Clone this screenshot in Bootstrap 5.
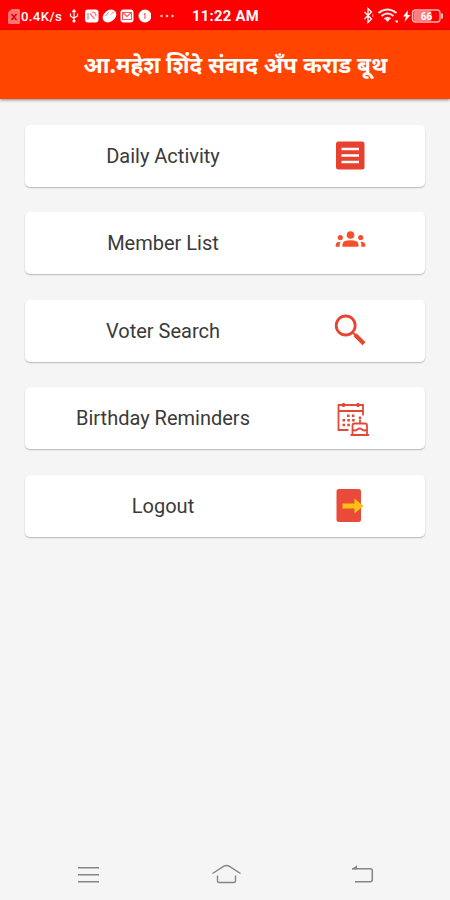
<!DOCTYPE html>
<html lang="mr">
<head>
<meta charset="utf-8">
<meta name="viewport" content="width=device-width, initial-scale=1">
<title>Karad Booth</title>
<link href="https://cdn.jsdelivr.net/npm/bootstrap@5.3.0/dist/css/bootstrap.min.css" rel="stylesheet">
<style>
body { background: #f5f5f5; font-family: Roboto, sans-serif; height: 900px; overflow: hidden; }
svg { display: block; flex: none; }
.status-bar { height: 30px; background: #fe0000; color: #fff; padding: 2px 6px 0 8px; }
.speed { width: 42px; margin: 0 6px 0 1px; font-size: 13.2px; font-weight: 500; letter-spacing: .35px; line-height: 15px; white-space: nowrap; }
.clock { width: 70px; margin-left: 18px; font-size: 14.8px; font-weight: 700; letter-spacing: .3px; line-height: 17px; white-space: nowrap; }
.app-bar { height: 69px; background: #ff4500; box-shadow: 0 1px 3px rgba(0,0,0,.45); padding-left: 83.5px; }
.app-title { font-family: "Noto Sans", "Noto Sans Devanagari", sans-serif; font-size: 22.65px; font-weight: 700; color: #fff; line-height: 32px; white-space: nowrap; }
.menu { padding: 25.5px 25px 0; gap: 25.5px; }
.menu-item { height: 62px; border-radius: 5px; box-shadow: 0 1px 1.5px rgba(0,0,0,.26); color: #3a3a3a; }
.menu-label { width: 276px; font-size: 20px; line-height: 24px; }
.menu-icon { margin-left: 29px; }
.nav-keys { height: 50px; padding: 0 74px; }
</style>
</head>
<body class="d-flex flex-column">
<header>
  <div class="status-bar d-flex align-items-center">
    <svg width="12" height="15" viewBox="0 0 12 15"><path d="M3.500 0H10.500a1.500 1.500 0 0 1 1.500 1.500V13.500a1.500 1.500 0 0 1-1.500 1.500H1.500A1.500 1.500 0 0 1 0 13.500V3.500z" fill="#ff7474"/><path d="M3.500 5l5 6M8.500 5l-5 6" stroke="#e00000" stroke-width="1.500"/></svg>
    <span class="speed">0.4K/s</span>
    <svg width="10" height="14" viewBox="0 0 10 14" fill="none" stroke="#fff" stroke-width="1.200"><path d="M5 2v10M1.500 4.500V7L5 9.500M8.500 4.500V7L5 9M3.300 3L5 1l1.700 2"/><circle cx="5" cy="12" r="1" fill="#fff"/></svg>
    <svg class="ms-1" width="68" height="14" viewBox="83 8 68 14">
      <rect x="85" y="8.500" width="13.500" height="13" rx="3" fill="#fff"/><path d="M88 12v6.500M90 12.500l4.500 5.500M91.500 11q4.500 0 4.500 4.500" fill="none" stroke="#f87070" stroke-width="1.200"/>
      <ellipse cx="109.500" cy="15" rx="7.500" ry="5.700" transform="rotate(-40 109.500 15)" fill="#fff"/><path d="M105.500 15l3-3.500M111 13.500l3-3" stroke="#f66" stroke-width="1"/>
      <rect x="120.500" y="8.500" width="13" height="13" rx="3" fill="#fff"/><path d="M122.500 11.500h9v7h-9zl4.500 4 4.500-4" fill="none" stroke="#f55" stroke-width="1.100"/>
      <circle cx="145" cy="15" r="6.500" fill="#fff"/><path d="M145 12v6M144 13h1" stroke="#f66" stroke-width="1.300"/>
    </svg>
    <svg style="margin-left:9px" width="14" height="4" viewBox="0 0 14 4" fill="#ffc2c2"><circle cx="1.500" cy="2" r="1.300"/><circle cx="7" cy="2" r="1.300"/><circle cx="12.500" cy="2" r="1.300"/></svg>
    <span class="clock">11:22 AM</span>
    <svg class="ms-auto" width="82" height="18" viewBox="362 7 82 18">
      <path d="M364.500 12l7 7-3.500 3.500V8.500l3.500 3.500-7 7" fill="none" stroke="#fff" stroke-width="1.300"/><path d="M372.800 14v3" stroke="#ff9a9a"/>
      <g fill="none" stroke="#ffe4e4" stroke-width="2.100"><path d="M378.500 13q9-7 18 0M381.500 16q6-5 12 0M384.500 19q3-2.500 6 0"/></g><path d="M385.500 19.500q2-1.500 4 0l-2 2.500zM395 20.500h3v2h-2z" fill="#fff"/>
      <path d="M408 10l-5 6.500h3L404.500 22l6-7h-3z" fill="#fff"/>
      <rect x="412.500" y="10" width="27.500" height="12" rx="3" fill="none" stroke="#ffb5b5" stroke-width="1.300"/><rect x="413.500" y="11" width="18" height="10" rx="2" fill="#ff7d7d"/><path d="M442 13.500v5" stroke="#ffb5b5" stroke-width="2"/>
      <text x="426.500" y="19.500" text-anchor="middle" font-family="Roboto, sans-serif" font-weight="700" font-size="10" fill="#fff">66</text>
    </svg>
  </div>
  <div class="app-bar d-flex align-items-center"><h1 class="app-title m-0">आ.महेश शिंदे संवाद अँप कराड बूथ</h1></div>
</header>
<main class="menu d-flex flex-column">
  <div class="menu-item bg-white d-flex align-items-center">
    <span class="menu-label text-center">Daily Activity</span>
    <svg class="menu-icon" width="40" height="40" viewBox="330 136 40 40"><rect x="336" y="141.500" width="28.500" height="28" rx="2.500" fill="#e9412f"/><path d="M341.500 149h17.500M341.500 155.500h17.500M341.500 162h17.500" stroke="#fff" stroke-width="2.600"/></svg>
  </div>
  <div class="menu-item bg-white d-flex align-items-center">
    <span class="menu-label text-center">Member List</span>
    <svg class="menu-icon" width="40" height="40" viewBox="330 223.500 40 40" fill="#f4502b"><circle cx="350.500" cy="235.500" r="3.800"/><path d="M342.500 247.200v-2.500q0-4 8-4t8 4v2.500z"/><circle cx="340.300" cy="238" r="2.600"/><circle cx="360.700" cy="238" r="2.600"/><path d="M335.700 247.200v-1.700q0-3.300 5-3.300-1 1-1 3v2zM365.300 247.200v-1.700q0-3.300-5-3.300 1 1 1 3v2z"/></svg>
  </div>
  <div class="menu-item bg-white d-flex align-items-center">
    <span class="menu-label text-center">Voter Search</span>
    <svg class="menu-icon" width="40" height="40" viewBox="330 311 40 40" fill="none" stroke="#e64632"><circle cx="345.700" cy="325.500" r="9.500" stroke-width="2.800"/><path d="M352.500 332.300l3 3" stroke-width="2"/><path d="M355 334.800l9 9" stroke-width="4.200"/></svg>
  </div>
  <div class="menu-item bg-white d-flex align-items-center">
    <span class="menu-label text-center">Birthday Reminders</span>
    <svg class="menu-icon" width="40" height="40" viewBox="330 398.500 40 40" fill="none" stroke="#e44836" stroke-width="1.800"><path d="M348.500 430.500h-10V405.500h24.500V416M338.500 411.500h24.500"/><path d="M343.500 403.500v4M358 403.500v4" stroke-width="2.500"/><path d="M347 416.300h8M342.500 420.800h12.500M342.500 425.500h7.500" stroke-width="2.400" stroke-dasharray="2.600 2.200"/><path d="M352.500 435v-9q0-2 2-2h10.500q2 0 2 2v9M350.500 435.500h18.500M360 424v-4M352.500 430q2.400 2 4.800 0t4.800 0 4.900 0"/><path d="M360 417v2.500" stroke-width="2.400"/></svg>
  </div>
  <div class="menu-item bg-white d-flex align-items-center">
    <span class="menu-label text-center">Logout</span>
    <svg class="menu-icon" width="40" height="40" viewBox="330 486 40 40"><rect x="336.500" y="489" width="24.500" height="33" rx="2.500" fill="#e94a3a"/><path d="M342.500 503.500h12v-5l9 7.500-9 7.500v-5h-12z" fill="#fbc011"/></svg>
  </div>
</main>
<footer class="nav-keys mt-auto d-flex align-items-center justify-content-between">
  <svg width="28" height="24" viewBox="0 0 28 24" stroke="#858585" stroke-width="1.400"><path d="M4 4.700h21M4 11.700h21M4 18.700h21"/></svg>
  <svg width="32" height="24" viewBox="0 0 32 24" fill="none" stroke="#858585" stroke-width="1.400"><path d="M2.500 10.500L13.500 3.300q3-1.500 6 0L30.500 10.500M7.500 12.500v5.500q0 1.500 1.500 1.500h15q1.500 0 1.500-1.500v-5.500"/></svg>
  <svg width="26" height="24" viewBox="0 0 26 24" fill="none" stroke="#858585" stroke-width="1.500"><path d="M2 5.700h18q2.300 0 2.300 2v9q0 2-2.300 2H5"/><path d="M1.500 6.200l5.500-4v4z" fill="#858585" stroke="none"/></svg>
</footer>
<script src="https://cdn.jsdelivr.net/npm/bootstrap@5.3.0/dist/js/bootstrap.bundle.min.js"></script>
</body>
</html>
